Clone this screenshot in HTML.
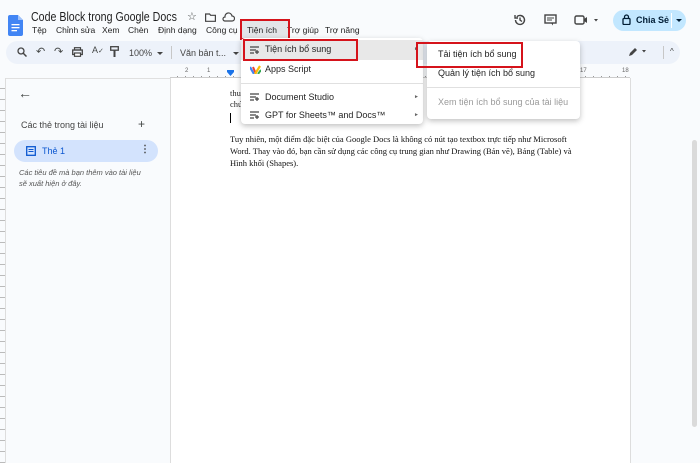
<!DOCTYPE html>
<html><head><meta charset="utf-8"><style>
*{box-sizing:border-box;margin:0;padding:0}
body{width:700px;height:463px;overflow:hidden;background:#f9fbfd;font-family:"Liberation Sans",sans-serif;position:relative;color:#1f1f1f}
.a{position:absolute;white-space:nowrap}
.ic{color:#444746}
.mb{position:absolute;top:25px;font-size:8.5px;white-space:nowrap}
.menu{position:absolute;background:#fff;border-radius:4px;box-shadow:0 2px 6px rgba(0,0,0,.25);font-size:9px;color:#1f1f1f}
.red{position:absolute;border:2.5px solid #d5131b}
</style></head><body>
<svg class="a" style="left:8px;top:15px" width="15" height="21" viewBox="0 0 15 21"><path d="M0 2a2 2 0 0 1 2-2h8l5 5v14a2 2 0 0 1-2 2H2a2 2 0 0 1-2-2z" fill="#4285f4"/><path d="M10 0v5h5z" fill="#a1c2fa"/><rect x="3.5" y="9" width="8" height="1.3" fill="#fff"/><rect x="3.5" y="12" width="8" height="1.3" fill="#fff"/><rect x="3.5" y="15" width="5.5" height="1.3" fill="#fff"/></svg>
<div class="a" style="left:31px;top:10px;font-size:12.5px;color:#1f1f1f;transform:scaleX(0.85);transform-origin:left top">Code Block trong Google Docs</div>
<div class="a ic" style="left:187px;top:10px;font-size:11px">☆</div>
<svg class="a" style="left:205px;top:13px" width="11" height="9"><path d="M0.6 1h4l1 1.3h4.8v6H0.6z" fill="none" stroke="#444" stroke-width="1.2"/></svg>
<svg class="a" style="left:222px;top:12px" width="13" height="10"><path d="M3 9h7a2.5 2.5 0 0 0 0-5 3.5 3.5 0 0 0-7 1A2 2 0 0 0 3 9z" fill="none" stroke="#444" stroke-width="1.2"/></svg>
<div class="mb" style="left:32px">Tệp</div>
<div class="mb" style="left:56px">Chỉnh sửa</div>
<div class="mb" style="left:102px">Xem</div>
<div class="mb" style="left:128px">Chèn</div>
<div class="mb" style="left:158px">Định dạng</div>
<div class="mb" style="left:206px">Công cụ</div>
<div class="a" style="left:241px;top:20px;width:49px;height:19px;background:#e3e5e8"></div>
<div class="mb" style="left:247px">Tiện ích</div>
<div class="mb" style="left:287px">Trợ giúp</div>
<div class="mb" style="left:325px">Trợ năng</div>
<div class="red" style="left:240px;top:19px;width:50px;height:21px"></div>
<svg class="a" style="left:513px;top:13px" width="14" height="14" viewBox="0 0 14 14"><path d="M2.5 7a4.5 4.5 0 1 0 1.3-3.2M2 2v3h3M7 4.5V7l2 1.5" fill="none" stroke="#444" stroke-width="1.4"/></svg>
<svg class="a" style="left:544px;top:14px" width="13" height="12"><rect x="1" y="1" width="11" height="8" fill="none" stroke="#444" stroke-width="1.4"/><path d="M3 4h7M3 6h5" stroke="#444"/><path d="M9 9v2.5l-2-2.5" fill="#444"/></svg>
<svg class="a" style="left:574px;top:15px" width="24" height="10"><rect x="1" y="1" width="9" height="8" rx="1.5" fill="none" stroke="#444" stroke-width="1.4"/><path d="M10 4l3-2v6l-3-2z" fill="#444"/><path d="M20 4l2 2.5 2-2.5z" fill="#444"/></svg>
<div class="a" style="left:613px;top:10px;width:73px;height:21px;border-radius:11px;background:#c2e7ff"></div>
<div class="a" style="left:671px;top:13px;width:1px;height:15px;background:#fff"></div>
<svg class="a" style="left:622px;top:14px" width="9" height="11"><rect x="1" y="4.5" width="7" height="6" rx="1" fill="none" stroke="#001d35" stroke-width="1.3"/><path d="M2.5 4.5V3a2 2 0 0 1 4 0v1.5" fill="none" stroke="#001d35" stroke-width="1.3"/></svg>
<div class="a" style="left:636px;top:15px;font-size:9px;font-weight:bold;color:#001d35">Chia Sẻ</div>
<svg class="a" style="left:676px;top:19px" width="6" height="4"><path d="M0 0h6L3 3z" fill="#001d35"/></svg>
<div class="a" style="left:6px;top:41px;width:674px;height:23px;border-radius:12px;background:#edf2fa"></div>
<svg class="a" style="left:17px;top:47px" width="10" height="10"><circle cx="4" cy="4" r="3" fill="none" stroke="#444" stroke-width="1.3"/><path d="M6 6l3.5 3.5" stroke="#444" stroke-width="1.5"/></svg>
<div class="a ic" style="left:36px;top:45px;font-size:11px">↶</div>
<div class="a ic" style="left:54px;top:45px;font-size:11px">↷</div>
<svg class="a" style="left:72px;top:47px" width="11" height="10"><rect x="0.7" y="3" width="9.6" height="4.5" fill="none" stroke="#444" stroke-width="1.3"/><rect x="2.5" y="0.7" width="6" height="2.3" fill="none" stroke="#444" stroke-width="1.2"/><rect x="2.5" y="6" width="6" height="3.3" fill="#fff" stroke="#444" stroke-width="1.2"/></svg>
<div class="a ic" style="left:92px;top:45px;font-size:9px">A<span style="font-size:7px">✓</span></div>
<svg class="a" style="left:110px;top:46px" width="9" height="12"><rect x="0.7" y="0.7" width="7.6" height="3.5" fill="none" stroke="#444" stroke-width="1.3"/><path d="M4.5 4v2M4.5 6v5" stroke="#444" stroke-width="2"/></svg>
<div class="a" style="left:129px;top:48px;font-size:9px;color:#444">100%</div>
<svg class="a" style="left:157px;top:52px" width="6" height="4"><path d="M0 0h6L3 3z" fill="#444"/></svg>
<div class="a" style="left:171px;top:46px;width:1px;height:13px;background:#c7c7c7"></div>
<div class="a" style="left:180px;top:48px;font-size:9px;color:#444">Văn bản t...</div>
<svg class="a" style="left:233px;top:52px" width="6" height="4"><path d="M0 0h6L3 3z" fill="#444"/></svg>
<svg class="a" style="left:628px;top:47px" width="20" height="10"><path d="M1 9l1-3 5-5 2 2-5 5z" fill="#444"/><path d="M14 3l2 2.5 2-2.5z" fill="#444"/></svg>
<div class="a" style="left:663px;top:46px;width:1px;height:13px;background:#c7c7c7"></div>
<div class="a ic" style="left:670px;top:47px;font-size:8px">^</div>
<div class="a" style="left:170px;top:68px;width:460px;height:10px;font-size:6px;color:#666;border-bottom:1px solid #ccc;background:repeating-linear-gradient(90deg,transparent 0 7px,#999 7px 8px) 0 8px/100% 2px no-repeat"><span style="position:absolute;left:15px;top:0">2</span><span style="position:absolute;left:37px;top:0">1</span><span style="position:absolute;left:410px;top:0">17</span><span style="position:absolute;left:452px;top:0">18</span></div>
<svg class="a" style="left:227px;top:70px" width="7" height="6"><path d="M0 0h7v2L3.5 6 0 2z" fill="#1a73e8"/></svg>
<div class="a" style="left:0;top:78px;width:6px;height:385px;border-right:1px solid #ddd;background:repeating-linear-gradient(180deg,transparent 0 10px,#bbb 10px 11px)"></div>
<div class="a" style="left:6px;top:78px;width:164px;height:385px;border-top:1px solid #e0e0e0"></div>
<div class="a ic" style="left:18px;top:85px;font-size:14px">←</div>
<div class="a" style="left:21px;top:120px;font-size:9px;color:#444">Các thẻ trong tài liệu</div>
<div class="a ic" style="left:138px;top:117px;font-size:12px">+</div>
<div class="a" style="left:14px;top:140px;width:144px;height:22px;border-radius:11px;background:#d3e3fd"></div>
<svg class="a" style="left:26px;top:146px" width="10" height="10"><rect x="0.7" y="0.7" width="8.6" height="8.6" fill="none" stroke="#0b57d0" stroke-width="1.3"/><path d="M2.5 3.5h5M2.5 5.5h5" stroke="#0b57d0"/></svg>
<div class="a" style="left:42px;top:146px;font-size:9px;color:#0b57d0">Thẻ 1</div>
<div class="a" style="left:140px;top:144px;font-size:10px;font-weight:bold;color:#444">⋮</div>
<div class="a" style="left:19px;top:167px;font-size:7.5px;font-style:italic;color:#555;line-height:11px">Các tiêu đề mà bạn thêm vào tài liệu<br>sẽ xuất hiện ở đây.</div>
<div class="a" style="left:170px;top:78px;width:461px;height:385px;background:#fff;border-left:1px solid #ddd;border-right:1px solid #ddd"></div>
<div class="a" style="left:230px;top:88px;font-family:'Liberation Serif',serif;font-size:8.5px;line-height:11px">thu<br>chú</div>
<div class="a" style="left:230px;top:113px;width:1px;height:10px;background:#000"></div>
<div class="a" style="left:230px;top:133px;font-family:'Liberation Serif',serif;font-size:8.5px;line-height:12px;color:#111">Tuy nhiên, một điểm đặc biệt của Google Docs là không có nút tạo textbox trực tiếp như Microsoft<br>Word. Thay vào đó, bạn cần sử dụng các công cụ trung gian như Drawing (Bản vẽ), Bảng (Table) và<br>Hình khối (Shapes).</div>
<div class="a" style="left:692px;top:140px;width:5px;height:287px;border-radius:3px;background:#dadada"></div>
<div class="menu" style="left:241px;top:38px;width:182px;height:86px">
 <div class="a" style="left:0;top:2px;width:182px;height:20px;background:#e8e8e8"></div>
 <svg class="a" style="left:9px;top:8px" width="9" height="8"><path d="M0 1h9M0 4h6M0 7h4M7 4v4M5 6h4" stroke="#444" stroke-width="1.2"/></svg>
 <div class="a" style="left:24px;top:6px">Tiện ích bổ sung</div>
 <div class="a" style="left:173px;top:8px;font-size:5px;color:#666">►</div>
 <svg class="a" style="left:9px;top:27px" width="11" height="9"><path d="M0 2l4 7" stroke="#4285f4" stroke-width="2.2"/><path d="M3 2l3 7" stroke="#ea4335" stroke-width="2"/><path d="M5 9l5-8" stroke="#fbbc04" stroke-width="2.2"/><path d="M8 9l3-4" stroke="#34a853" stroke-width="2"/></svg>
 <div class="a" style="left:24px;top:26px">Apps Script</div>
 <div class="a" style="left:0;top:45px;width:182px;height:1px;background:#e0e0e0"></div>
 <svg class="a" style="left:9px;top:55px" width="9" height="8"><path d="M0 1h9M0 4h6M0 7h4M7 4v4M5 6h4" stroke="#444" stroke-width="1.2"/></svg>
 <div class="a" style="left:24px;top:54px">Document Studio</div>
 <div class="a" style="left:173px;top:56px;font-size:5px;color:#666">►</div>
 <svg class="a" style="left:9px;top:73px" width="9" height="8"><path d="M0 1h9M0 4h6M0 7h4M7 4v4M5 6h4" stroke="#444" stroke-width="1.2"/></svg>
 <div class="a" style="left:24px;top:72px">GPT for Sheets™ and Docs™</div>
 <div class="a" style="left:173px;top:74px;font-size:5px;color:#666">►</div>
</div>
<div class="red" style="left:243px;top:39px;width:115px;height:22px"></div>
<div class="menu" style="left:427px;top:41px;width:153px;height:78px">
 <div class="a" style="left:11px;top:8px">Tải tiện ích bổ sung</div>
 <div class="a" style="left:11px;top:27px">Quản lý tiện ích bổ sung</div>
 <div class="a" style="left:0;top:46px;width:153px;height:1px;background:#e0e0e0"></div>
 <div class="a" style="left:11px;top:56px;color:#9a9a9a">Xem tiện ích bổ sung của tài liệu</div>
</div>
<div class="red" style="left:416px;top:42px;width:107px;height:26px"></div>
</body></html>
